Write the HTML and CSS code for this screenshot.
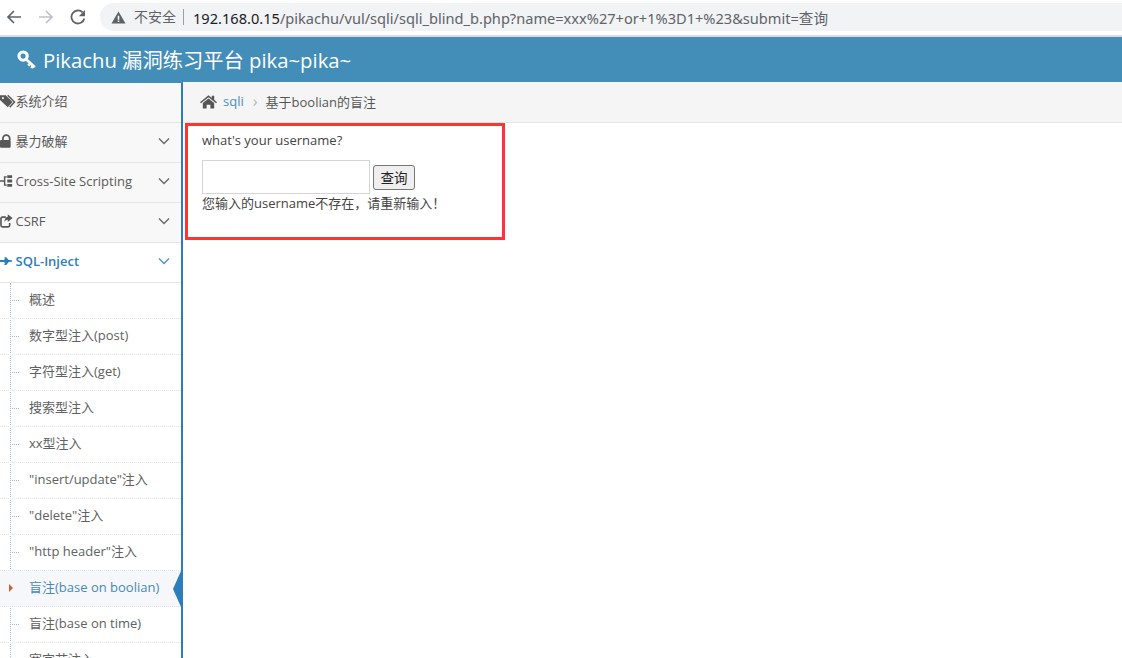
FILE: index.html
```html
<!DOCTYPE html>
<html lang="zh-CN">
<head>
    <meta charset="UTF-8">
    <title>Pikachu</title>
    <link rel="stylesheet" href="styles.css">
</head>
<body>
    <!-- browser toolbar -->
    <div class="toolbar">
        <svg class="tool-icon" viewBox="0 0 16 16"><path d="M15 8H2M8 2L2 8l6 6" fill="none" stroke="#5f6368" stroke-width="1.700"/></svg>
        <svg class="tool-icon" viewBox="0 0 16 16"><path d="M1 8h13M8 2l6 6-6 6" fill="none" stroke="#bdc1c6" stroke-width="1.700"/></svg>
        <svg class="tool-icon" viewBox="0 0 16 16"><path d="M14.300 9.500A6.500 6.500 0 1 1 12.600 3.400" fill="none" stroke="#5f6368" stroke-width="1.800"/><path d="M15 1v6.200H8.800z" fill="#5f6368"/></svg>
        <div class="address">
            <svg class="warn" viewBox="0 0 16 16"><path d="M8 1.500L15.500 14.500H.5z" fill="#5f6368"/><path d="M7.200 6h1.600v4.500H7.200zM7.200 11.300h1.600v1.600H7.200z" fill="#fff"/></svg>
            <span class="insecure">不安全</span>
            <span class="url"><b>192.168.0.15</b>/pikachu/vul/sqli/sqli_blind_b.php?name=xxx%27+or+1%3D1+%23&amp;submit=查询</span>
        </div>
    </div>

    <header class="topbar">
        <svg class="key" viewBox="0 0 18 18"><circle cx="5.500" cy="5.500" r="3.700" fill="none" stroke="#fff" stroke-width="2.800"/><path d="M8.500 8.500l7.500 7M12 12l-1.800 2M14.500 14.300l-1.600 1.900" fill="none" stroke="#fff" stroke-width="2.400"/></svg>
        <span>Pikachu 漏洞练习平台 pika~pika~</span>
    </header>

    <div class="layout">
        <nav class="sidebar">
            <div class="nav-item">
                <svg class="nav-icon" viewBox="0 0 16 14"><path d="M0 1h6l7 7-5 5.500-8-7.500z" fill="#585858"/><path d="M8 1l7 7-5 5.500" fill="none" stroke="#585858" stroke-width="1.500"/><circle cx="3" cy="4" r="1.100" fill="#f8f8f8"/></svg>
                <span class="nav-cjk">系统介绍</span>
            </div>
            <div class="nav-item">
                <svg class="nav-icon" viewBox="0 0 16 14"><path d="M3 6V4.500a3.500 3.500 0 0 1 7 0V6" fill="none" stroke="#585858" stroke-width="1.800"/><rect x="0" y="6" width="11" height="8" rx="1" fill="#585858"/></svg>
                <span class="nav-cjk">暴力破解</span>
                <svg class="chevron" viewBox="0 0 12 8"><path d="M1 1.500l5 5 5-5" fill="none" stroke="#666" stroke-width="1.300"/></svg>
            </div>
            <div class="nav-item">
                <svg class="nav-icon" viewBox="0 0 16 14"><path d="M0 6.200h5v1.600H0zM4 2h1.500v10H4zM4 2h3v1.500H4zM4 10.500h3v1.500H4zM7.500 1h5v3h-5zM7.500 5.500h5v3h-5zM7.500 10h5v3h-5z" fill="#585858"/></svg>
                <span>Cross-Site Scripting</span>
                <svg class="chevron" viewBox="0 0 12 8"><path d="M1 1.500l5 5 5-5" fill="none" stroke="#666" stroke-width="1.300"/></svg>
            </div>
            <div class="nav-item">
                <svg class="nav-icon" viewBox="0 0 16 14"><path d="M6 3H2.500A1.500 1.500 0 0 0 1 4.500v7A1.500 1.500 0 0 0 2.500 13h6a1.500 1.500 0 0 0 1.500-1.500V9" fill="none" stroke="#585858" stroke-width="1.700"/><path d="M8 0l5 4-5 4V5.700C6 5.700 5 6.500 4.500 8.500 4.300 5 6 2.700 8 2.500z" fill="#585858"/></svg>
                <span>CSRF</span>
                <svg class="chevron" viewBox="0 0 12 8"><path d="M1 1.500l5 5 5-5" fill="none" stroke="#666" stroke-width="1.300"/></svg>
            </div>
            <div class="nav-item nav-open">
                <svg class="nav-icon" viewBox="0 0 16 14"><path d="M0 6h4.500L5 3.500H4V3h2.500L9 6l3 .3L13 7l-1 .7-3 .3-2.500 3H4v-.5h1L4.500 8H0z" fill="#2b7dbc"/></svg>
                <span>SQL-Inject</span>
                <svg class="chevron" viewBox="0 0 12 8"><path d="M1 1.500l5 5 5-5" fill="none" stroke="#4c8fbd" stroke-width="1.300"/></svg>
            </div>
            <ul class="submenu">
                <li>概述</li>
                <li>数字型注入(post)</li>
                <li>字符型注入(get)</li>
                <li>搜索型注入</li>
                <li>xx型注入</li>
                <li>"insert/update"注入</li>
                <li>"delete"注入</li>
                <li>"http header"注入</li>
                <li class="current">盲注(base on boolian)</li>
                <li>盲注(base on time)</li>
                <li>宽字节注入</li>
            </ul>
        </nav>

        <main class="content">
            <div class="breadcrumb">
                <svg class="home" viewBox="0 0 18 15"><path d="M9 .8L0 8.200l1 1.200L9 2.900l8 6.500 1-1.200-3-2.500V1.500h-2.500v2.300z" fill="#555"/><path d="M9 4.200L3 9.100V15h4v-4h4v4h4V9.100z" fill="#555"/></svg>
                <a class="crumb-link">sqli</a>
                <span class="crumb-sep">›</span>
                <span>基于boolian的盲注</span>
            </div>
            <div class="page-body">
                <p class="question">what's your username?</p>
                <form class="query-form">
                    <input class="query-input" type="text">
                    <button class="query-btn" type="button">查询</button>
                </form>
                <p class="notice">您输入的username不存在，请重新输入！</p>
            </div>
            <div class="red-box"></div>
        </main>
    </div>
</body>
</html>
```

FILE: styles.css
```css
* { margin: 0; padding: 0; box-sizing: border-box; }
html, body { height: 658px; overflow: hidden; }
body { font-family: "Open Sans", "Noto Sans CJK SC", sans-serif; font-size: 13px; color: #444; background: #fff; display: flex; flex-direction: column; }

/* --- browser toolbar --- */
.toolbar { height: 37px; flex: none; display: flex; align-items: center; padding: 0 0 1px 6px; background: #fff; border-bottom: 2px solid #dcdcdc; }
.tool-icon { width: 16px; height: 16px; margin-right: 16px; flex: none; }
.tool-icon:nth-child(3) { margin-right: 14px; }
.address { flex: 1; height: 28px; display: flex; align-items: center; padding-left: 11px; background: #f1f3f4; border-radius: 14px 0 0 14px; }
.warn { width: 15px; height: 15px; margin-right: 8px; }
.insecure { color: #5f6368; font-size: 14px; padding-right: 7px; border-right: 1px solid #9aa0a6; line-height: 16px; }
.url { font-family: "Noto Sans", "Noto Sans CJK SC", sans-serif; font-size: 14.6px; color: #5f6368; margin-left: 9px; white-space: nowrap; }
.url b { font-weight: 400; color: #202124; }

/* --- blue header --- */
.topbar { height: 46px; flex: none; display: flex; align-items: center; padding: 0 0 3px 17px; background: #438eb9; color: #fff; font-size: 20.3px; }
.key { width: 20px; height: 20px; margin-right: 6px; margin-top: 3px; }

.layout { flex: 1; display: flex; min-height: 0; }

/* --- sidebar --- */
.sidebar { width: 183px; flex: none; background: #fff; overflow: hidden; border-right: 2px solid #2b7dbc; }
.nav-item { height: 40px; display: flex; align-items: center; padding-bottom: 3px; background: #f8f8f8; border-bottom: 1px solid #e5e5e5; color: #585858; margin-right: -2px; border-right: 1px solid #f5f5f5; box-shadow: inset -1px 0 0 #ccc; position: relative; z-index: 1; }
.nav-icon { width: 15.500px; height: 14px; flex: none; }
.nav-cjk { margin-top: -2px; }
.nav-item .chevron { width: 12px; height: 8px; margin-left: auto; margin-right: 12px; }
.nav-open { background: #fff; color: #2b7dbc; font-weight: 600; border-right: 0; margin-right: 0; box-shadow: none; }
.nav-open .chevron { margin-right: 11px; }
.submenu { list-style: none; background: #fff; position: relative; }
.submenu::before { content: ""; position: absolute; left: 10px; top: 0; bottom: 0; border-left: 1px dotted #9dbdd6; }
.submenu li { height: 36px; line-height: 32px; padding-left: 29px; border-bottom: 1px dotted #e4e4e4; color: #616161; position: relative; white-space: nowrap; }
.submenu li::before { content: ""; position: absolute; left: 12px; top: 17px; width: 7px; border-top: 1px dotted #9dbdd6; }
.submenu .current { background: #f5f7fb; color: #4b88b7; }
.submenu .current::before { left: 9px; top: 13px; width: 0; border-top: 4px solid transparent; border-bottom: 4px solid transparent; border-left: 4px solid #c86139; }
.submenu .current::after { content: ""; position: absolute; right: 0; top: 0; border-top: 18px solid transparent; border-bottom: 18px solid transparent; border-right: 8px solid #2b7dbc; }

/* --- main content --- */
.content { flex: 1; position: relative; min-width: 0; margin-top: -1px; }
.breadcrumb { height: 41px; display: flex; align-items: center; padding: 0 0 2px 17px; background: #f5f5f5; border-bottom: 1px solid #e5e5e5; color: #555; font-size: 13px; }
.home { width: 17px; height: 15px; margin-right: 6px; }
.crumb-link { color: #4c8fbd; }
.crumb-sep { color: #b2b6bf; margin: 0 8px 0 9px; font-size: 16px; line-height: 16px; }
.page-body { padding: 8px 0 0 19px; }
.question { line-height: 18px; }
.query-form { display: flex; align-items: flex-end; margin-top: 11px; }
.query-input { width: 168px; height: 34px; border: 1px solid #d5d5d5; background: #fff; }
.query-btn { width: 42px; height: 25px; margin: 0 0 4px 3px; background: #efefef; border: 1px solid #767676; border-radius: 3px; font-family: "Noto Sans CJK SC", sans-serif; font-size: 13.500px; line-height: 20px; padding-bottom: 2px; color: #222; }
.notice { line-height: 18px; }

/* annotation drawn over the page */
.red-box { position: absolute; left: 2px; top: 41px; width: 320px; height: 117px; border: 3px solid #f33; }
```
